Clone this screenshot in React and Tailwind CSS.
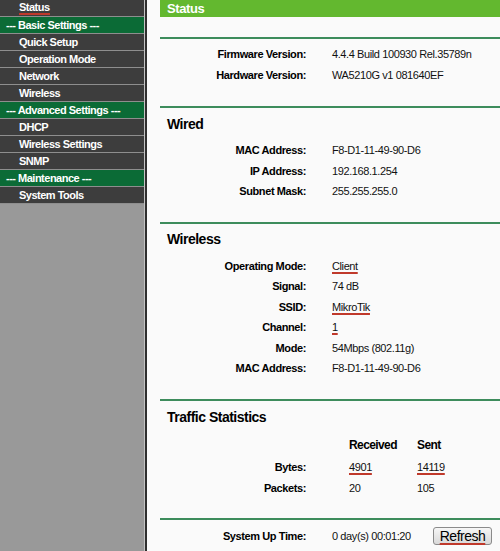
const MENU = [
  { label: 'Status', spell: true },
  { label: '--- Basic Settings ---', group: true },
  { label: 'Quick Setup' },
  { label: 'Operation Mode' },
  { label: 'Network' },
  { label: 'Wireless' },
  { label: '--- Advanced Settings ---', group: true },
  { label: 'DHCP' },
  { label: 'Wireless Settings' },
  { label: 'SNMP' },
  { label: '--- Maintenance ---', group: true },
  { label: 'System Tools' },
]

const spell = 'underline decoration-[#c0392b] decoration-2 underline-offset-[2px]'

function Line() {
  return <div className="h-[2px] bg-[#3d8c5c]" />
}

function Heading({ children, tall }) {
  return (
    <div
      className={
        'flex items-center pl-[7px] text-[14px] font-bold tracking-[-0.5px] text-black ' +
        (tall ? 'h-[34px]' : 'h-[32px]')
      }
    >
      {children}
    </div>
  )
}

function Row({ label, value, mark }) {
  return (
    <div className="grid h-[20.5px] grid-cols-[146px_1fr] items-center gap-x-[26px] text-[11px] tracking-[-0.4px]">
      <div className="text-right font-bold text-black">{label}</div>
      <div className="text-[#111]">
        {mark ? <span className={spell}>{value}</span> : value}
      </div>
    </div>
  )
}

function TrafficRow({ label, a, b, mark, head }) {
  const cell = head ? 'text-[12px] font-bold tracking-[-0.6px] text-black' : 'text-[#111]'
  return (
    <div className="grid h-[21.5px] grid-cols-[146px_43px_68px_1fr] items-center text-[11px] tracking-[-0.4px]">
      <div className="text-right font-bold text-black">{label}</div>
      <div />
      <div className={cell}>{mark ? <span className={spell}>{a}</span> : a}</div>
      <div className={cell}>{mark ? <span className={spell}>{b}</span> : b}</div>
    </div>
  )
}

export default function App() {
  return (
    <div
      className="flex min-h-[551px] w-[500px] overflow-hidden"
      style={{ fontFamily: '"Liberation Sans", Arial, sans-serif' }}
    >
      {/* Left menu */}
      <aside className="flex w-[147px] shrink-0 border-r-2 border-[#2f2f2f]">
        <div className="flex-1 border-r border-[#c4c4c4] bg-[#999999]">
          {MENU.map((m) => (
            <div
              key={m.label}
              className={
                'flex h-[17px] items-center border-b border-[#8e8e8e] text-[11px] font-bold tracking-[-0.5px] text-white ' +
                (m.group ? 'bg-[#0b6b36] pl-[6px]' : 'bg-[#3d3d3d] pl-[19px]')
              }
            >
              {m.spell ? (
                <span className="inline-block border-b-2 border-[#c0392b] leading-[12px]">{m.label}</span>
              ) : (
                m.label
              )}
            </div>
          ))}
        </div>
      </aside>

      {/* Content */}
      <main className="flex-1 bg-[#fafafa] pl-[13px]">
        <div className="h-[17px] bg-[#63b82f] pl-[7px] text-[13px] font-bold leading-[17px] tracking-[-0.4px] text-white">
          Status
        </div>
        <div className="h-[20px]" />
        <Line />
        <div className="pb-[21px] pt-[5px]">
          <Row label="Firmware Version:" value="4.4.4 Build 100930 Rel.35789n" />
          <Row label="Hardware Version:" value="WA5210G v1 081640EF" />
        </div>

        <Line />
        <Heading>Wired</Heading>
        <div className="pb-[20px]">
          <Row label="MAC Address:" value="F8-D1-11-49-90-D6" />
          <Row label="IP Address:" value="192.168.1.254" />
          <Row label="Subnet Mask:" value="255.255.255.0" />
        </div>

        <Line />
        <Heading>Wireless</Heading>
        <div className="pb-[20px]">
          <Row label="Operating Mode:" value="Client" mark />
          <Row label="Signal:" value="74 dB" />
          <Row label="SSID:" value="MikroTik" mark />
          <Row label="Channel:" value="1" mark />
          <Row label="Mode:" value="54Mbps (802.11g)" />
          <Row label="MAC Address:" value="F8-D1-11-49-90-D6" />
        </div>

        <Line />
        <Heading tall>Traffic Statistics</Heading>
        <div className="pb-[19px]">
          <TrafficRow label="" a="Received" b="Sent" head />
          <TrafficRow label="Bytes:" a="4901" b="14119" mark />
          <TrafficRow label="Packets:" a="20" b="105" />
        </div>

        <Line />
        <div className="flex h-[32px] items-center text-[11px] tracking-[-0.4px]">
          <div className="w-[146px] text-right font-bold text-black">System Up Time:</div>
          <div className="ml-[26px] w-[101px] text-[#111]">0 day(s) 00:01:20</div>
          <button className="flex h-[18px] w-[59px] items-center justify-center rounded-[3px] border border-[#8a8a8a] bg-gradient-to-b from-[#f6f6f6] to-[#d9d9d9] text-[14px] leading-none tracking-[-0.5px] text-black">
            <span className={spell}>Refresh</span>
          </button>
        </div>
      </main>
    </div>
  )
}
